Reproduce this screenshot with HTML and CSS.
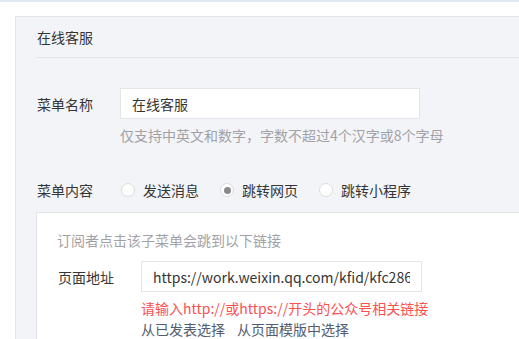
FILE: index.html
```html
<!DOCTYPE html>
<html lang="zh-CN">
<head>
<meta charset="utf-8">
<title>在线客服</title>
<link rel="stylesheet" href="styles.css">
</head>
<body>
<div class="topbar"></div>
<div class="panel">
  <div class="panel-title">在线客服</div>
  <div class="row row-name">
    <label class="label">菜单名称</label>
    <input class="input input-name" type="text" value="在线客服">
  </div>
  <div class="hint">仅支持中英文和数字，字数不超过4个汉字或8个字母</div>
  <div class="row row-radio">
    <span class="label">菜单内容</span>
    <span class="radio"><span class="circle"></span>发送消息</span>
    <span class="radio"><span class="circle checked"></span>跳转网页</span>
    <span class="radio"><span class="circle"></span>跳转小程序</span>
  </div>
  <div class="box">
    <div class="box-tip">订阅者点击该子菜单会跳到以下链接</div>
    <div class="row row-url">
      <span class="label">页面地址</span>
      <input class="input input-url" type="text" value="https://work.weixin.qq.com/kfid/kfc286a1b2c3d4e5f">
    </div>
    <div class="error">请输入http://或https://开头的公众号相关链接</div>
    <div class="links"><span class="link">从已发表选择</span><span class="link">从页面模版中选择</span></div>
  </div>
</div>
</body>
</html>
```
FILE: styles.css
```css
* { box-sizing: border-box; }
html, body { margin: 0; padding: 0; background: #fff; overflow: hidden; }
body {
  font-family: "Noto Sans CJK SC", "Microsoft YaHei", sans-serif;
  font-size: 14px;
  color: #353535;
  width: 519px;
  height: 339px;
}
.topbar { height: 2px; background: #e0e8f4; }
.panel {
  margin: 14px 0 0 15px;
  background: #f3f4f8;
  border: 1px solid #e4e5e9;
  border-right: none;
  border-bottom: none;
  padding-left: 20px;
  height: 323px;
  overflow: hidden;
}
.panel-title {
  height: 41px;
  line-height: 41px;
  border-bottom: 1px solid #e4e5e9;
  padding-left: 1px;
}
.row { display: flex; align-items: center; }
.label { width: 84px; flex: none; padding-left: 1px; }
.row-name { margin-top: 30px; }
.input {
  font-family: inherit;
  font-size: 14px;
  color: #353535;
  background: #fff;
  border: 1px solid #e4e5e9;
  height: 31px;
  padding: 0 11px;
  outline: none;
  border-radius: 0;
}
.input-name { width: 300px; }
.hint {
  margin-top: 5px;
  padding-left: 84px;
  line-height: 22px;
  color: #a2a2a6;
}
.row-radio { margin-top: 33px; line-height: 22px; }
.radio { display: inline-flex; align-items: center; margin-right: 20px; }
.circle {
  width: 14px; height: 14px;
  border: 1px solid #dcdcdf;
  border-radius: 50%;
  background: #fff;
  margin-right: 8px;
  margin-left: 1px;
  display: inline-flex;
  align-items: center;
  justify-content: center;
}
.circle.checked::after {
  content: "";
  width: 7px; height: 7px;
  border-radius: 50%;
  background: #8a8a8a;
}
.box {
  margin-top: 11px;
  background: #fff;
  border-top: 1px solid #e4e5e9;
  border-left: 1px solid #e4e5e9;
  padding: 16px 0 0 20px;
  height: 130px;
  overflow: hidden;
}
.box-tip { line-height: 22px; color: #a2a2a6; }
.row-url { margin-top: 10px; }
.input-url { width: 281px; }
.error { margin-top: 6px; padding-left: 84px; line-height: 20px; color: #fa5151; }
.links { margin-top: 2px; padding-left: 84px; line-height: 19px; color: #535c70; }
.link { margin-right: 12px; }
```
